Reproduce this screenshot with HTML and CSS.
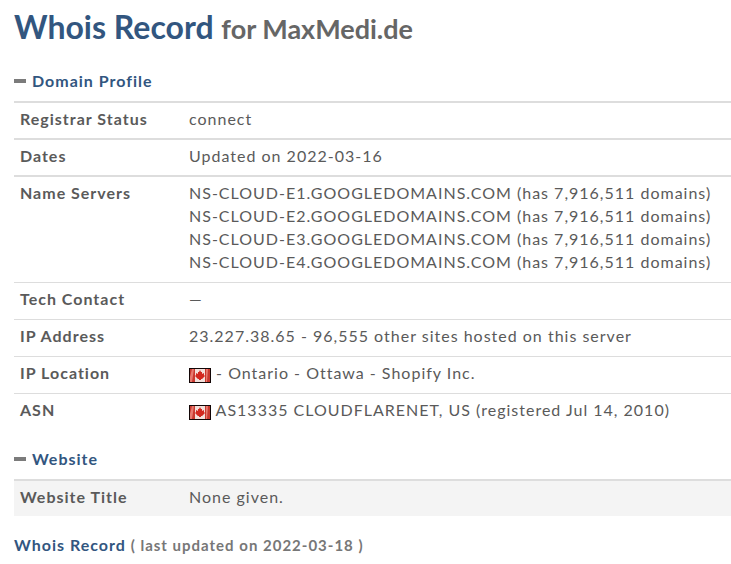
FILE: index.html
```html
<!DOCTYPE html>
<html lang="en">
<head>
    <meta charset="UTF-8">
    <meta name="viewport" content="width=device-width, initial-scale=1.0">
    <title>Whois Record for MaxMedi.de</title>
    <link rel="stylesheet" href="styles.css">
</head>
<body>
    <svg class="defs" width="0" height="0" aria-hidden="true">
        <symbol id="flag-ca" viewBox="0 0 22 15">
            <rect width="22" height="15" fill="#120606"/>
            <rect x="1" y="1" width="20" height="13" fill="#f3dfda"/>
            <path d="M1 1h5v13H1zM16 1h5v13h-5z" fill="#c9392f"/>
            <path d="M3 1h2L3 14H1V9zM17 1h2l-1 13h-1z" fill="#e77a70"/>
            <path d="M11 2l1 2h1v2l2-1v2l1 1-3 3h-1v1h-2v-1H9L6 8l1-1V5l2 1V4h1z" fill="#d3281f"/>
        </symbol>
    </svg>

    <h1>Whois Record <small>for MaxMedi.de</small></h1>

    <h2><span class="minus"></span>Domain Profile</h2>
    <table>
        <tr class="heavy">
            <th scope="row">Registrar Status</th>
            <td>connect</td>
        </tr>
        <tr class="heavy">
            <th scope="row">Dates</th>
            <td>Updated on 2022-03-16</td>
        </tr>
        <tr class="heavy tall">
            <th scope="row">Name Servers</th>
            <td>
                NS-CLOUD-E1.GOOGLEDOMAINS.COM (has 7,916,511 domains)<br>
                NS-CLOUD-E2.GOOGLEDOMAINS.COM (has 7,916,511 domains)<br>
                NS-CLOUD-E3.GOOGLEDOMAINS.COM (has 7,916,511 domains)<br>
                NS-CLOUD-E4.GOOGLEDOMAINS.COM (has 7,916,511 domains)
            </td>
        </tr>
        <tr>
            <th scope="row">Tech Contact</th>
            <td>—</td>
        </tr>
        <tr>
            <th scope="row">IP Address</th>
            <td>23.227.38.65 - 96,555 other sites hosted on this server</td>
        </tr>
        <tr>
            <th scope="row">IP Location</th>
            <td><svg class="flag" role="img" aria-label="Canada"><use href="#flag-ca"/></svg> - Ontario - Ottawa - Shopify Inc.</td>
        </tr>
        <tr>
            <th scope="row">ASN</th>
            <td><svg class="flag" role="img" aria-label="Canada"><use href="#flag-ca"/></svg> AS13335 CLOUDFLARENET, US (registered Jul 14, 2010)</td>
        </tr>
    </table>

    <h2><span class="minus"></span>Website</h2>
    <table class="striped">
        <tr class="heavy">
            <th scope="row">Website Title</th>
            <td>None given.</td>
        </tr>
    </table>

    <h3>Whois Record <small>( last updated on 2022-03-18 )</small></h3>
</body>
</html>
```
FILE: styles.css
```css
body {
    margin: 0;
    padding: 8px 0 0 14px;
    background: #fff;
    color: #5a5a5a;
    font-family: Lato, "Liberation Sans", sans-serif;
    font-size: 16px;
    line-height: 23px;
    letter-spacing: 1px;
}

.defs {
    display: block;
}

h1, h2, h3 {
    margin: 17px 0 0;
    color: #32567f;
    font-size: 16px;
    font-weight: bold;
}

h1 {
    margin: 0 0 21px;
    font-size: 32px;
    line-height: 38px;
    letter-spacing: normal;
}

h1 small {
    font-size: 27px;
    color: #666;
}

h2 {
    display: flex;
    align-items: center;
    gap: 6px;
}

h3 small {
    font-size: 15px;
    color: #777;
}

.minus {
    width: 12px;
    height: 4px;
    background: #7b7b7b;
}

table {
    width: 100%;
    margin-top: 9px;
    border-collapse: separate;
    border-spacing: 0;
}

th, td {
    padding: 4px 6px 9px;
    border-top: 1px solid #ddd;
    text-align: left;
    vertical-align: top;
}

th {
    width: 157px;
    font-weight: bold;
}

td {
    padding-right: 0;
}

.heavy th, .heavy td {
    padding-bottom: 8px;
    border-top-width: 2px;
}

.tall th, .tall td {
    padding-bottom: 9px;
}

.striped tr {
    background: #f4f4f4;
}

.flag {
    width: 22px;
    height: 15px;
    vertical-align: -4px;
}
```
